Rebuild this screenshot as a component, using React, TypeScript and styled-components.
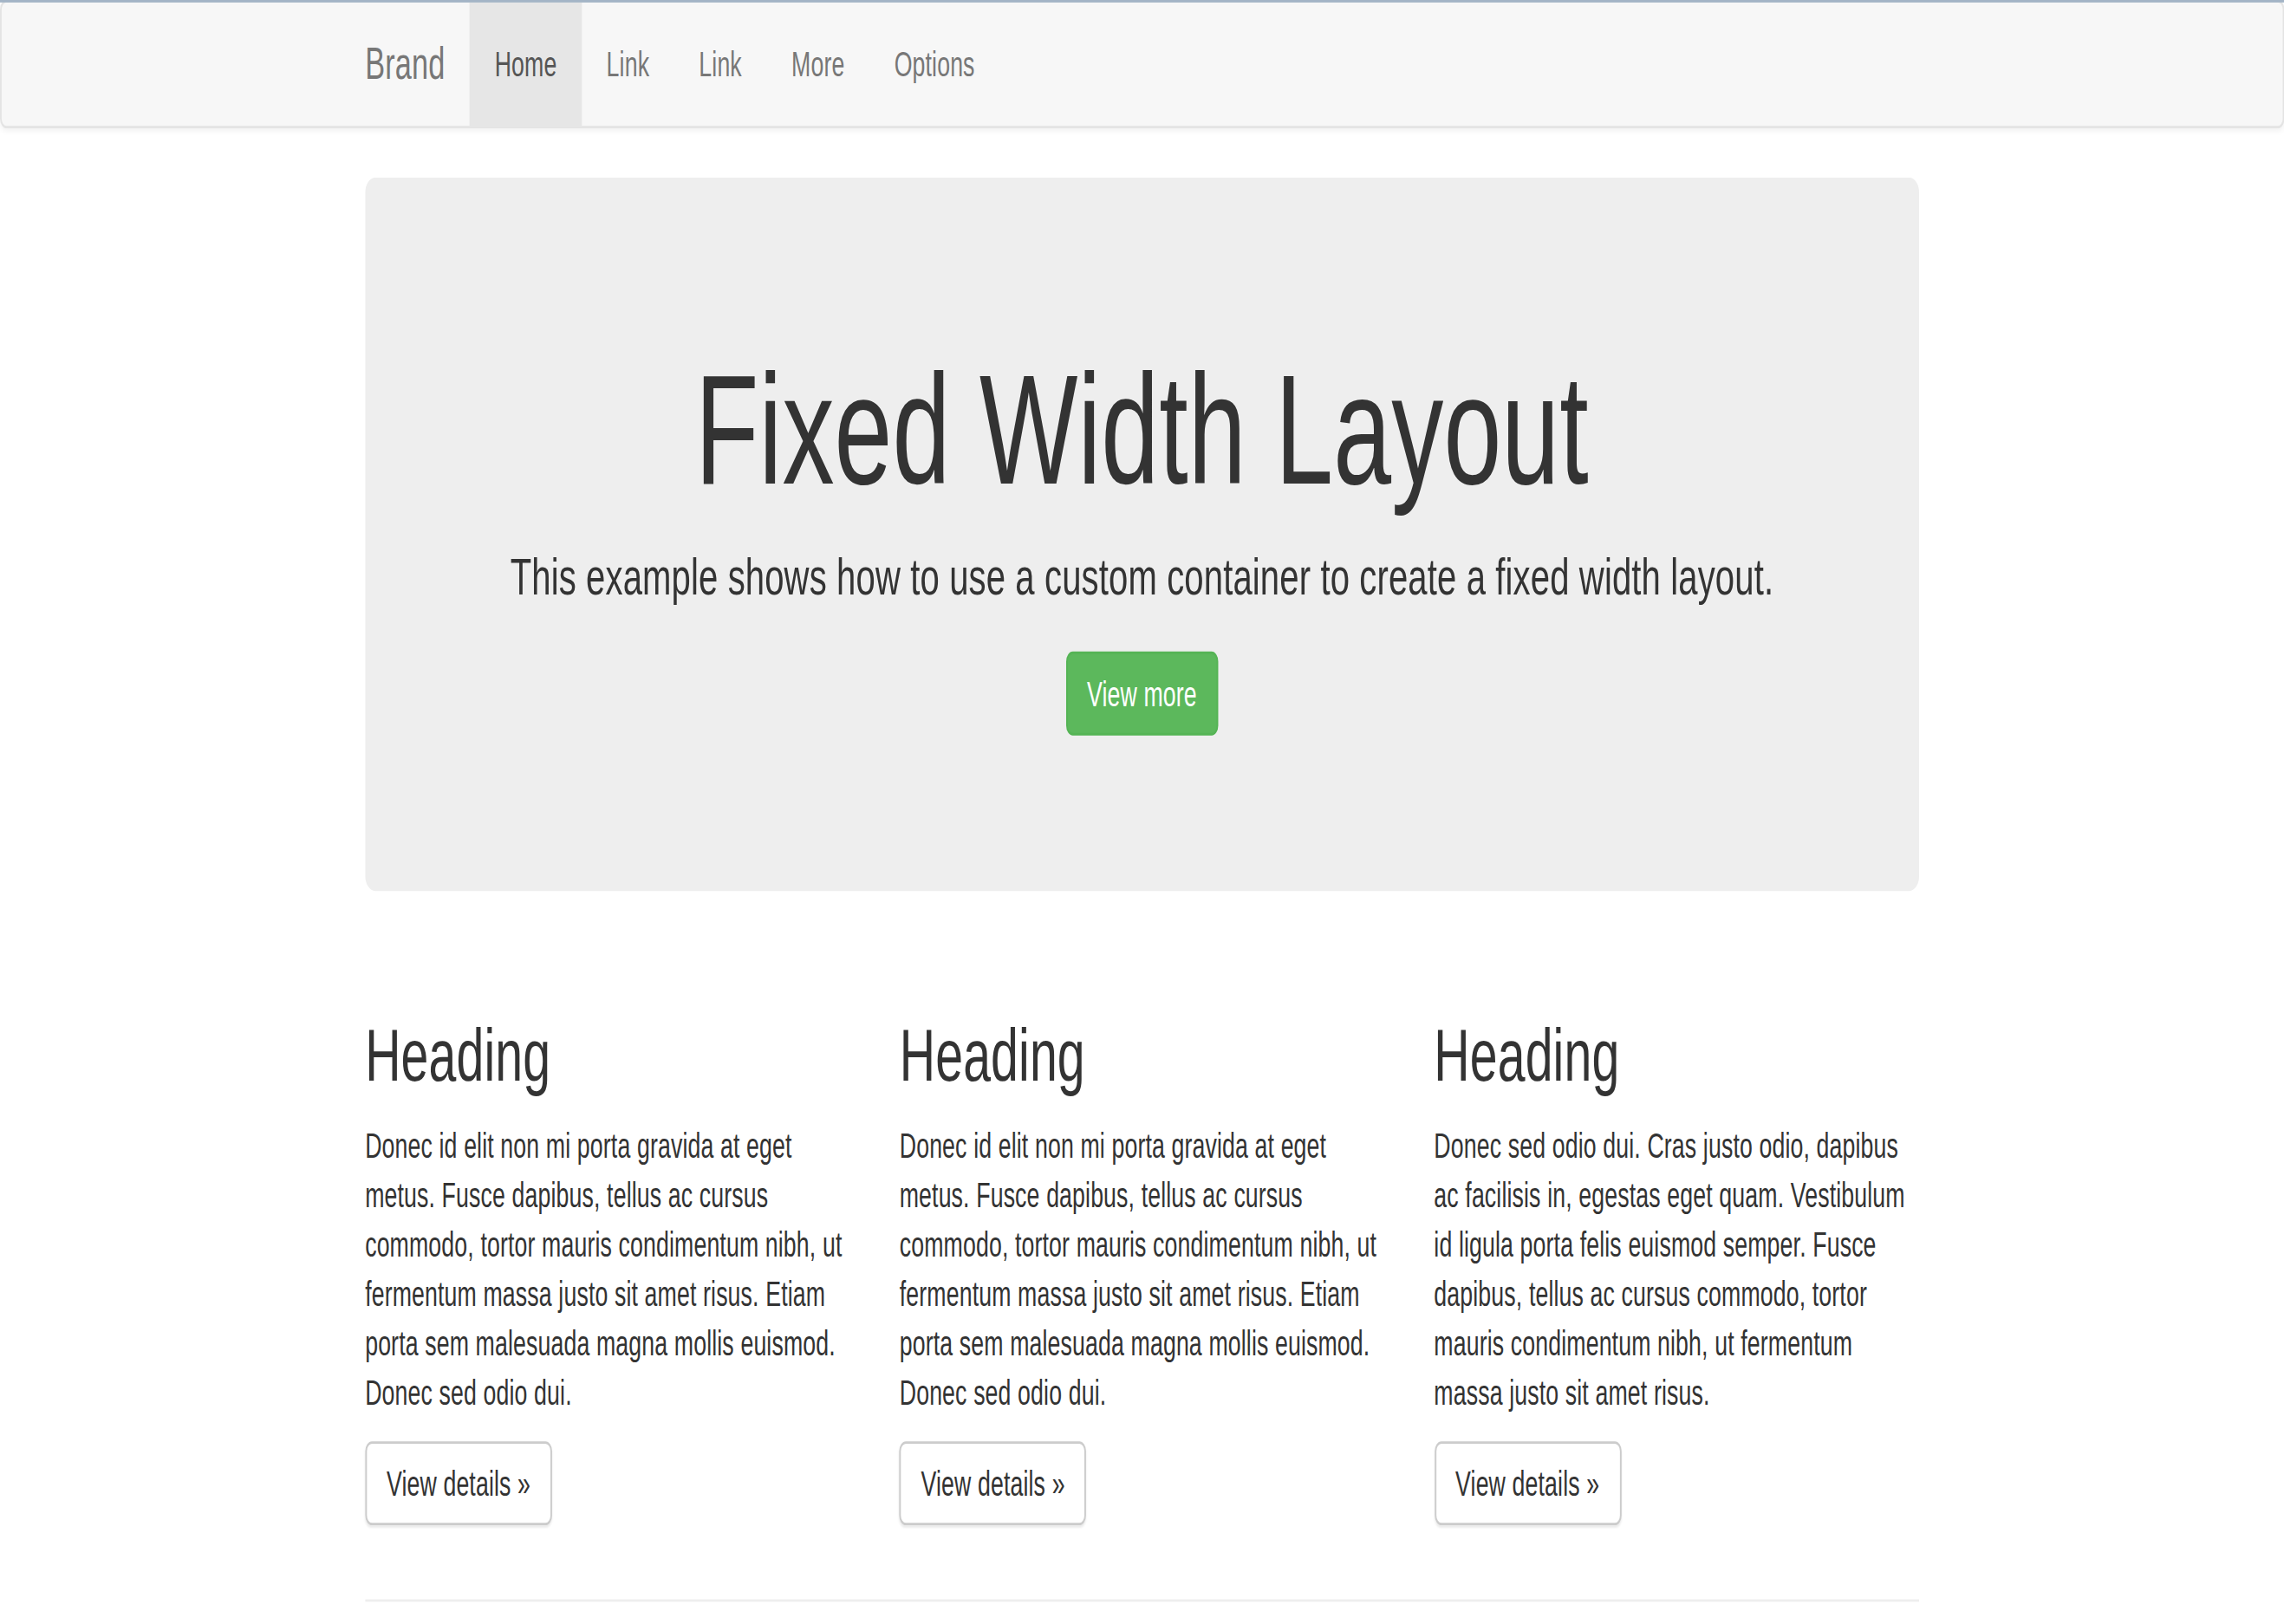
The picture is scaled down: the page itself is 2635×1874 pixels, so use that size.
import React from "react";
import styled, { createGlobalStyle } from "styled-components";

const GlobalStyle = createGlobalStyle`
  html, body {
    margin: 0;
    padding: 0;
    background: #ffffff;
  }
  body {
    font-family: "Liberation Sans", Arial, Helvetica, sans-serif;
    font-size: 14px;
    line-height: 1.42857143;
    letter-spacing: 0.005em;
    color: #333333;
  }
  * { box-sizing: border-box; }
`;

const Frame = styled.div`
  width: 100vw;
  height: 100vh;
  min-height: 1874px;
  overflow: hidden;
`;

/* The reference is a Bootstrap page photographed with a non-uniform stretch;
   the whole page is drawn at its natural size and stretched once. */
const Stage = styled.div`
  position: relative;
  width: 1381.7px;
  transform: scale(1.907, 2.848);
  transform-origin: 0 0;
`;

const TopLine = styled.div`
  position: absolute;
  top: 0;
  left: 0;
  right: 0;
  height: 0.9px;
  background: #a3b4c6;
  z-index: 2;
`;

const Navbar = styled.nav`
  min-height: 50px;
  margin-bottom: 20px;
  background: #f7f7f7;
  border: 1px solid #e4e4e4;
  border-radius: 4px;
  box-shadow: 0 1px 3px rgba(0, 0, 0, 0.06);
`;

const Container = styled.div`
  width: 970px;
  margin: 0 auto;
  padding: 0 15px;
`;

const NavInner = styled(Container)`
  display: flex;
  align-items: stretch;
`;

const Brand = styled.a`
  display: block;
  height: 50px;
  margin-left: -15px;
  padding: 15px;
  font-size: 18px;
  line-height: 20px;
  color: #777777;
  text-decoration: none;
`;

const NavList = styled.ul`
  display: flex;
  margin: 0;
  padding: 0;
  list-style: none;
`;

const NavLink = styled.a<{ $active?: boolean }>`
  display: block;
  padding: 15px;
  line-height: 20px;
  font-size: 14px;
  text-decoration: none;
  color: ${(p) => (p.$active ? "#555555" : "#777777")};
  background: ${(p) => (p.$active ? "#e6e6e6" : "transparent")};
`;

const Jumbotron = styled.div`
  padding: 48px 60px;
  margin-bottom: 30px;
  background: #eeeeee;
  border-radius: 6px;
  text-align: center;
`;

const Title = styled.h1`
  margin: 20px 0 10px;
  font-size: 63px;
  line-height: 1.1;
  font-weight: 500;
  color: #333333;
`;

const Lead = styled.p`
  margin: 0 0 15px;
  font-size: 21px;
  line-height: 30px;
`;

const Button = styled.a<{ $variant: "success" | "default" }>`
  display: inline-block;
  padding: 6px 12px;
  font-size: 14px;
  line-height: 20px;
  border-radius: 4px;
  text-decoration: none;
  white-space: nowrap;
  vertical-align: baseline;
  border: 1px solid ${(p) => (p.$variant === "success" ? "#55b455" : "#cccccc")};
  background: ${(p) => (p.$variant === "success" ? "#5cb85c" : "#ffffff")};
  color: ${(p) => (p.$variant === "success" ? "#ffffff" : "#333333")};
  box-shadow: ${(p) =>
    p.$variant === "success" ? "none" : "0 1px 1px rgba(0, 0, 0, 0.08)"};
`;

const Row = styled.div`
  display: grid;
  grid-template-columns: repeat(3, 1fr);
  margin: 0 -15px;
`;

const Column = styled.div`
  padding: 0 15px;
`;

const Heading = styled.h2`
  margin: 20px 0 10px;
  font-size: 30px;
  line-height: 1.1;
  font-weight: 500;
  color: #333333;
`;

const Text = styled.p`
  margin: 0 0 10px;
`;

const Rule = styled.hr`
  margin: 20px 0 0;
  border: 0;
  border-top: 1px solid #eeeeee;
`;

const textA =
  "Donec id elit non mi porta gravida at eget metus. Fusce dapibus, tellus ac cursus commodo, tortor mauris condimentum nibh, ut fermentum massa justo sit amet risus. Etiam porta sem malesuada magna mollis euismod. Donec sed odio dui.";
const textB =
  "Donec sed odio dui. Cras justo odio, dapibus ac facilisis in, egestas eget quam. Vestibulum id ligula porta felis euismod semper. Fusce dapibus, tellus ac cursus commodo, tortor mauris condimentum nibh, ut fermentum massa justo sit amet risus.";

const columns = [textA, textA, textB];
const links = ["Home", "Link", "Link", "More", "Options"];

export default function App() {
  return (
    <>
      <GlobalStyle />
      <Frame>
        <Stage>
          <TopLine />
          <Navbar>
            <NavInner>
              <Brand href="#">Brand</Brand>
              <NavList>
                {links.map((l, i) => (
                  <li key={i}>
                    <NavLink href="#" $active={i === 0}>
                      {l}
                    </NavLink>
                  </li>
                ))}
              </NavList>
            </NavInner>
          </Navbar>
          <Container>
            <Jumbotron>
              <Title>Fixed Width Layout</Title>
              <Lead>
                This example shows how to use a custom container to create a fixed width layout.
              </Lead>
              <Lead>
                <Button href="#" $variant="success">
                  View more
                </Button>
              </Lead>
            </Jumbotron>
            <Row>
              {columns.map((t, i) => (
                <Column key={i}>
                  <Heading>Heading</Heading>
                  <Text>{t}</Text>
                  <Text>
                    <Button href="#" $variant="default">
                      View details »
                    </Button>
                  </Text>
                </Column>
              ))}
            </Row>
            <Rule />
          </Container>
        </Stage>
      </Frame>
    </>
  );
}
